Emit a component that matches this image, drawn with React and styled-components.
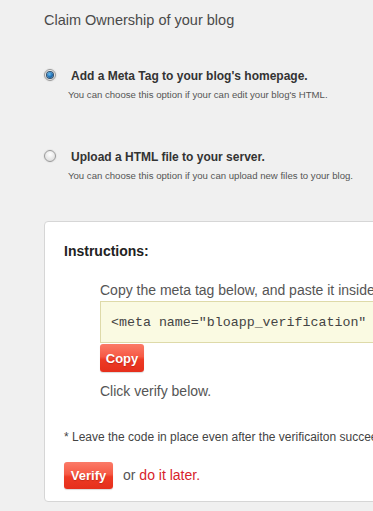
import React from "react";
import styled, { createGlobalStyle } from "styled-components";

const GlobalStyle = createGlobalStyle`
  html, body {
    margin: 0;
    padding: 0;
    background: #f0f0f0;
    overflow: hidden;
  }
  body {
    font-family: "Liberation Sans", Arial, sans-serif;
  }
`;

const Page = styled.div`
  padding: 10px 0 0 44px;
  width: 700px;
  min-height: 511px;
  box-sizing: border-box;
`;

const Title = styled.h1`
  margin: 0;
  font-size: 14.5px;
  line-height: 20px;
  font-weight: normal;
  color: #4a4a4a;
`;

const Option = styled.div`
  display: grid;
  grid-template-columns: 24px auto;
  margin-top: ${(p) => p.$top}px;
`;

const Radio = styled.span`
  width: 12px;
  height: 12px;
  margin-top: 1px;
  border-radius: 50%;
  border: 1px solid #9a9a9a;
  box-sizing: border-box;
  background: radial-gradient(circle at 50% 35%, #ffffff 0%, #e2e2e2 70%, #cfcfcf 100%);
  display: flex;
  align-items: center;
  justify-content: center;
  box-shadow: 0 0 0 1px #e6e6e6;

  &::after {
    content: "";
    display: ${(p) => (p.$checked ? "block" : "none")};
    width: 6px;
    height: 6px;
    border-radius: 50%;
    background: radial-gradient(circle at 40% 35%, #6fc0f0 0%, #1b6db5 55%, #0d3f70 100%);
    box-shadow: 0 0 0 1px #31506c;
  }
`;

const Label = styled.div`
  padding-left: 3px;
  font-size: 12px;
  line-height: 16px;
  font-weight: bold;
  color: #333;
  white-space: nowrap;
`;

const Sub = styled.div`
  grid-column: 2;
  margin-top: 4px;
  font-size: 9.6px;
  line-height: 13px;
  color: #555;
  white-space: nowrap;
`;

const Box = styled.div`
  margin-top: 39px;
  background: #fff;
  border: 1px solid #d6d6d6;
  border-radius: 4px;
  padding: 20px 20px 12px 19px;
`;

const Heading = styled.h2`
  margin: 0;
  font-size: 14px;
  line-height: 18px;
  font-weight: bold;
  color: #222;
`;

const Steps = styled.div`
  padding-left: 36px;
  margin-top: 21px;
`;

const Text = styled.div`
  font-size: 14px;
  line-height: 18px;
  color: #555;
  white-space: nowrap;
  margin-bottom: ${(p) => p.$mb || 0}px;
  margin-top: ${(p) => p.$mt || 0}px;
`;

const Code = styled.div`
  background: #fafae2;
  border: 1px solid #dedaa9;
  padding: 13px 10px 11px;
  font-family: "Liberation Mono", "Courier New", monospace;
  font-size: 13.3px;
  line-height: 16px;
  color: #444;
  white-space: nowrap;
`;

const Button = styled.button`
  display: block;
  width: ${(p) => p.$w}px;
  height: ${(p) => p.$h}px;
  margin-top: ${(p) => p.$mt || 0}px;
  padding: 0;
  border: none;
  border-radius: 3px;
  background: linear-gradient(#fb7b68 0%, #f65a45 45%, #ee3b25 55%, #e52f1c 100%);
  color: #fff;
  font-family: "Liberation Sans", Arial, sans-serif;
  font-size: 13px;
  font-weight: bold;
  text-shadow: 0 1px 1px rgba(120, 20, 10, 0.35);
  box-shadow: 0 1px 1px rgba(0, 0, 0, 0.15);
  cursor: pointer;
`;

const Note = styled.div`
  margin-top: 30px;
  font-size: 12px;
  line-height: 15px;
  color: #444;
  white-space: nowrap;
`;

const Actions = styled.div`
  display: flex;
  align-items: center;
  gap: 10px;
  margin-top: 17px;
`;

const Later = styled.span`
  font-size: 14px;
  line-height: 18px;
  color: #555;
  margin-top: -2px;

  a {
    color: #d7232b;
    text-decoration: none;
  }
`;

export default function App() {
  return (
    <>
      <GlobalStyle />
      <Page>
        <Title>Claim Ownership of your blog</Title>

        <Option $top={38}>
          <Radio $checked />
          <Label>Add a Meta Tag to your blog's homepage.</Label>
          <Sub>You can choose this option if your can edit your blog's HTML.</Sub>
        </Option>

        <Option $top={48}>
          <Radio />
          <Label>Upload a HTML file to your server.</Label>
          <Sub>You can choose this option if you can upload new files to your blog.</Sub>
        </Option>

        <Box>
          <Heading>Instructions:</Heading>
          <Steps>
            <Text $mb={2}>
              Copy the meta tag below, and paste it inside the &lt;head&gt; section of your homepage.
            </Text>
            <Code>&lt;meta name="bloapp_verification" content="6c5b2e1a" /&gt;</Code>
            <Button $w={44} $h={28} $mt={1}>Copy</Button>
            <Text $mt={10}>Click verify below.</Text>
          </Steps>
          <Note>* Leave the code in place even after the verificaiton succeeds.</Note>
          <Actions>
            <Button $w={49} $h={27}>Verify</Button>
            <Later>
              or <a href="#">do it later.</a>
            </Later>
          </Actions>
        </Box>
      </Page>
    </>
  );
}
